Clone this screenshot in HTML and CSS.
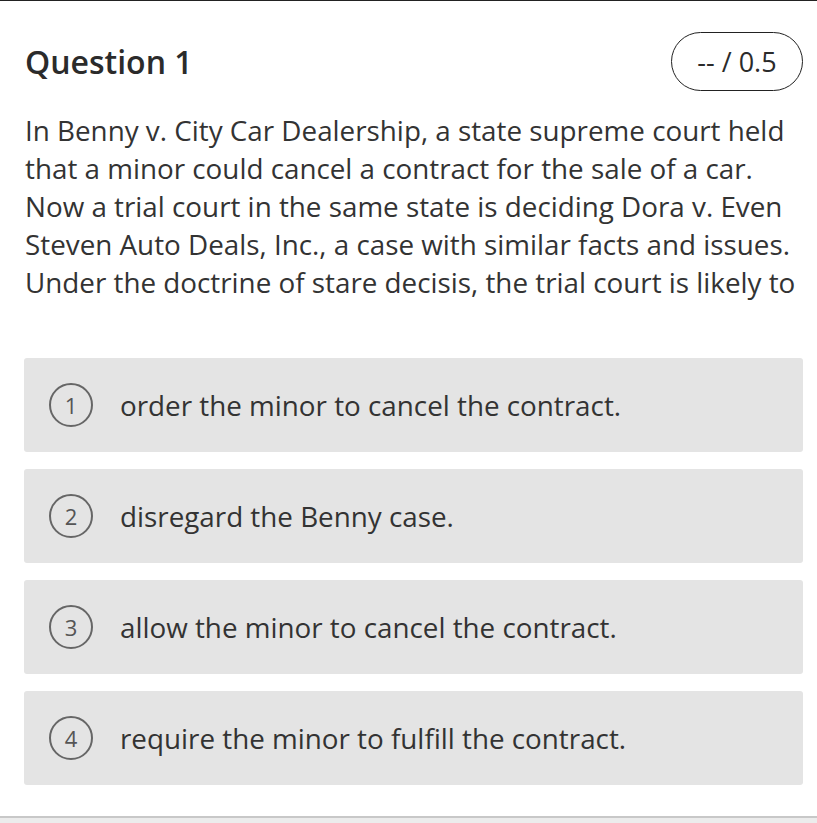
FILE: index.html
```html
<!DOCTYPE html>
<html>
<head>
<meta charset="utf-8">
<link rel="stylesheet" href="styles.css">
</head>
<body>
<div class="page">
  <div class="header">
    <h2 class="title">Question 1</h2>
    <div class="score">-- / 0.5</div>
  </div>
  <p class="prompt">In Benny v. City Car Dealership, a state supreme court held that a minor could cancel a contract for the sale of a car. Now a trial court in the same state is deciding Dora v. Even Steven Auto Deals, Inc., a case with similar facts and issues. Under the doctrine of stare decisis, the trial court is likely to</p>
  <div class="options">
    <div class="option"><span class="num">1</span><span class="text">order the minor to cancel the contract.</span></div>
    <div class="option"><span class="num">2</span><span class="text">disregard the Benny case.</span></div>
    <div class="option"><span class="num">3</span><span class="text">allow the minor to cancel the contract.</span></div>
    <div class="option"><span class="num">4</span><span class="text">require the minor to fulfill the contract.</span></div>
  </div>
</div>
<div class="footer-line"></div>
</body>
</html>
```
FILE: styles.css
```css
html, body {
  margin: 0;
  padding: 0;
  background: #fff;
}
body {
  font-family: "Open Sans", "Liberation Sans", sans-serif;
  color: #333;
  width: 817px;
  height: 823px;
  overflow: hidden;
  border-top: 1px solid #222;
  box-sizing: border-box;
  position: relative;
}
.page {
  padding: 31px 14px 0 24px;
}
.header {
  display: flex;
  justify-content: space-between;
  align-items: center;
  height: 59px;
}
.title {
  margin: 0;
  font-size: 32px;
  font-weight: 600;
  color: #2b2b2b;
  padding-left: 1px;
}
.score {
  height: 59px;
  width: 132px;
  box-sizing: border-box;
  border: 1.5px solid #222;
  border-radius: 30px;
  display: flex;
  align-items: center;
  justify-content: center;
  font-size: 27px;
  color: #2b2b2b;
}
.prompt {
  margin: 20px 0 0 0;
  font-size: 27.8px;
  line-height: 38px;
  color: #333;
  padding-left: 1px;
}
.options {
  margin-top: 57px;
  display: flex;
  flex-direction: column;
  gap: 17px;
}
.option {
  background: #e4e4e4;
  border-radius: 3px;
  height: 94px;
  display: flex;
  align-items: center;
  padding-left: 25px;
}
.num {
  width: 44px;
  height: 44px;
  box-sizing: border-box;
  border: 2px solid #666;
  border-radius: 50%;
  display: flex;
  align-items: center;
  justify-content: center;
  font-size: 22px;
  color: #555;
  flex: none;
}
.text {
  margin-left: 27px;
  font-size: 27.8px;
  color: #333;
}
.footer-line {
  position: absolute;
  left: 0;
  right: 0;
  bottom: 0;
  height: 5px;
  border-top: 2px solid #c8c8c8;
  background: #ececec;
}
```
